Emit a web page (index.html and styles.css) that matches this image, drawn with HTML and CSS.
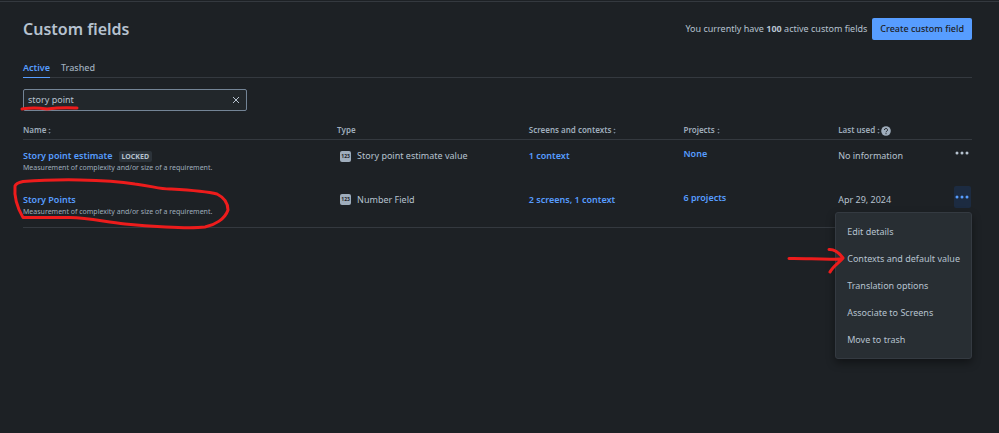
FILE: index.html
```html
<!DOCTYPE html>
<html lang="en">
<head>
<meta charset="utf-8">
<title>Custom fields</title>
<link rel="stylesheet" href="styles.css">
</head>
<body>
<svg class="defs" aria-hidden="true">
  <symbol id="sort" viewBox="0 0 4 8"><path d="M2 0.5 3.6 2.8H.4zM2 7.5 3.6 5.2H.4z"/></symbol>
  <symbol id="dots" viewBox="0 0 14 4"><circle cx="2" cy="2" r="1.5"/><circle cx="7" cy="2" r="1.5"/><circle cx="12" cy="2" r="1.5"/></symbol>
</svg>
<main class="page">
  <header class="header">
    <h1 class="title">Custom fields</h1>
    <p class="count">You currently have <strong>100</strong> active custom fields</p>
    <button class="create" type="button">Create custom field</button>
  </header>
  <nav class="tabs">
    <a class="tab tab-active" href="#active">Active</a>
    <a class="tab" href="#trashed">Trashed</a>
  </nav>
  <div class="search">
    <input class="search-input" type="text" value="story point" aria-label="Search custom fields">
    <button class="clear" type="button" aria-label="Clear search">
      <svg width="8" height="8" viewBox="0 0 8 8"><path d="M1 1l6 6M7 1L1 7"/></svg>
    </button>
  </div>
  <table class="fields">
    <colgroup><col class="c-name"><col class="c-type"><col class="c-screens"><col class="c-projects"><col class="c-used"><col></colgroup>
    <thead>
      <tr>
        <th>Name <svg class="sort"><use href="#sort"/></svg></th>
        <th>Type</th>
        <th>Screens and contexts <svg class="sort"><use href="#sort"/></svg></th>
        <th>Projects <svg class="sort"><use href="#sort"/></svg></th>
        <th>Last used <svg class="sort"><use href="#sort"/></svg><svg class="help" viewBox="0 0 10 10"><circle cx="5" cy="5" r="4.8"/><path d="M3.5 4a1.5 1.5 0 1 1 2.3 1.2Q5 5.6 5 6.3M5 7.2v1"/></svg></th>
        <th></th>
      </tr>
    </thead>
    <tbody>
      <tr>
        <td>
          <div class="name"><a href="#estimate">Story point estimate</a><span class="badge">LOCKED</span></div>
          <div class="desc">Measurement of complexity and/or size of a requirement.</div>
        </td>
        <td><div class="type"><span class="type-icon">123</span>Story point estimate value</div></td>
        <td><a href="#contexts">1 context</a></td>
        <td class="projects"><a href="#projects">None</a></td>
        <td>No information</td>
        <td class="actions"><button class="more" type="button" aria-label="More actions"><svg class="dots"><use href="#dots"/></svg></button></td>
      </tr>
      <tr>
        <td>
          <div class="name"><a href="#points">Story Points</a></div>
          <div class="desc">Measurement of complexity and/or size of a requirement.</div>
        </td>
        <td><div class="type"><span class="type-icon">123</span>Number Field</div></td>
        <td><a href="#screens">2 screens, 1 context</a></td>
        <td class="projects"><a href="#projects">6 projects</a></td>
        <td>Apr 29, 2024</td>
        <td class="actions">
          <div class="menu-anchor">
            <button class="more more-open" type="button" aria-label="More actions" aria-expanded="true"><svg class="dots"><use href="#dots"/></svg></button>
            <div class="menu" role="menu">
              <button type="button" role="menuitem">Edit details</button>
              <button type="button" role="menuitem">Contexts and default value</button>
              <button type="button" role="menuitem">Translation options</button>
              <button type="button" role="menuitem">Associate to Screens</button>
              <button type="button" role="menuitem">Move to trash</button>
            </div>
          </div>
        </td>
      </tr>
    </tbody>
  </table>
  <svg class="marks marks-left" width="240" height="240" viewBox="0 0 240 240" aria-hidden="true">
    <path d="M22 109Q34 107 47 109Q62 107 77 108"/>
    <path d="M23 217.500C18 209 14 197 15 186Q16 183 23 181.500C55 179 105 179 135 184C152 186 159 189 170 189C187 190 205 191 217 194C225 198 228 204 228 210C225 219 215 225 205 227C187 229 145 226 125 224C105 222 90 218 70 217.500Z"/>
  </svg>
  <svg class="marks marks-right" width="60" height="28" viewBox="0 0 60 28" aria-hidden="true">
    <path d="M3 11.500C18 11 38 13 54 12M43 2.500C50 2 54 7 57 11C54 15 47 19 44 25"/>
  </svg>
</main>
</body>
</html>
```
FILE: styles.css
```css
* { box-sizing: border-box; }
body {
  margin: 0;
  background: #1d2125;
  color: #b6c2cf;
  font: 9px/16px "Noto Sans", "Open Sans", sans-serif;
}
button, input { font: inherit; color: inherit; }
button { padding: 0; border: 0; background: none; }
a { color: #579dff; text-decoration: none; font-weight: 600; }
.defs { position: absolute; width: 0; height: 0; }
.page {
  position: relative;
  min-height: 100vh;
  padding: 16px 27px 0 23px;
}
.page::before {
  content: "";
  position: absolute;
  inset: 1px 0 auto;
  height: 1px;
  background: #34393f;
}
.header { display: flex; align-items: center; height: 26px; }
.title { flex: 1; margin: 0; font-size: 16px; line-height: 24px; font-weight: 600; }
.count { margin: 0 5px 0 0; }
.create {
  height: 22px;
  padding: 0 8px;
  border-radius: 2px;
  background: #579dff;
  color: #1d2125;
  font-weight: 500;
}
.tabs { display: flex; gap: 11px; margin-top: 18px; border-bottom: 1px solid #34393f; }
.tab { height: 17px; margin-bottom: -1px; color: #9fadbc; font-weight: 500; }
.tab-active { color: #579dff; border-bottom: 1px solid #579dff; height: 18px; font-weight: 600; }
.search {
  display: flex;
  width: 224px;
  height: 22px;
  margin-top: 11px;
  padding: 0 6px 0 4px;
  border: 1px solid #738496;
  border-radius: 2px;
  background: #22272b;
}
.search-input { flex: 1; min-width: 0; padding: 0; border: 0; outline: 0; background: none; }
.clear { display: flex; align-items: center; }
.clear path { stroke: #b6c2cf; fill: none; }
.fields {
  width: 100%;
  margin-top: 12px;
  table-layout: fixed;
  border-collapse: collapse;
  border-bottom: 1px solid #34393f;
}
.c-name { width: 33.1%; }
.c-type { width: 20.2%; }
.c-screens { width: 16.3%; }
.c-projects { width: 16.3%; }
.c-used { width: 12.2%; }
th {
  height: 16px;
  padding: 0 0 2px;
  border-bottom: 1px solid #34393f;
  color: #9fadbc;
  font-size: 8px;
  line-height: 14px;
  font-weight: 600;
  text-align: left;
  white-space: nowrap;
}
.sort { width: 3px; height: 6px; fill: #738496; vertical-align: middle; }
.help { width: 10px; height: 10px; margin-left: 1px; fill: #9fadbc; vertical-align: middle; }
.help path { fill: none; stroke: #1d2125; }
td { height: 44px; padding: 8px 0 0; vertical-align: top; white-space: nowrap; }
.projects { padding-top: 6px; }
.name { display: flex; align-items: center; gap: 6px; height: 16px; }
.badge {
  padding: 0 3px;
  border-radius: 2px;
  background: #2c333a;
  font-size: 7px;
  line-height: 11px;
  font-weight: 700;
}
.desc { color: #9fadbc; font-size: 7px; line-height: 8px; }
.type { display: flex; align-items: center; gap: 6px; padding-left: 3px; }
.type-icon {
  width: 11px;
  height: 11px;
  border-radius: 2px;
  background: #9fadbc;
  color: #1d2125;
  font-size: 5px;
  line-height: 11px;
  font-weight: 700;
  text-align: center;
}
.actions { padding-top: 2px; }
.more { display: flex; align-items: center; justify-content: center; width: 17px; height: 22px; border-radius: 2px; }
.more-open { background: #1c2b41; color: #579dff; }
.dots { width: 14px; height: 4px; fill: currentColor; }
.menu-anchor { position: relative; }
.menu {
  position: absolute;
  top: 26px;
  right: 0;
  display: flex;
  flex-direction: column;
  padding: 6px 0 4px;
  border: 1px solid #343a41;
  border-radius: 3px;
  background: #282e33;
  box-shadow: 0 4px 8px #0006;
}
.menu button { height: 27px; padding: 0 11px; text-align: left; }
.marks { position: absolute; fill: none; stroke: #ed1c1c; stroke-width: 3; stroke-linecap: round; stroke-linejoin: round; pointer-events: none; }
.marks-left { top: 0; left: 0; }
.marks-right { top: 247px; right: 153px; }
```
